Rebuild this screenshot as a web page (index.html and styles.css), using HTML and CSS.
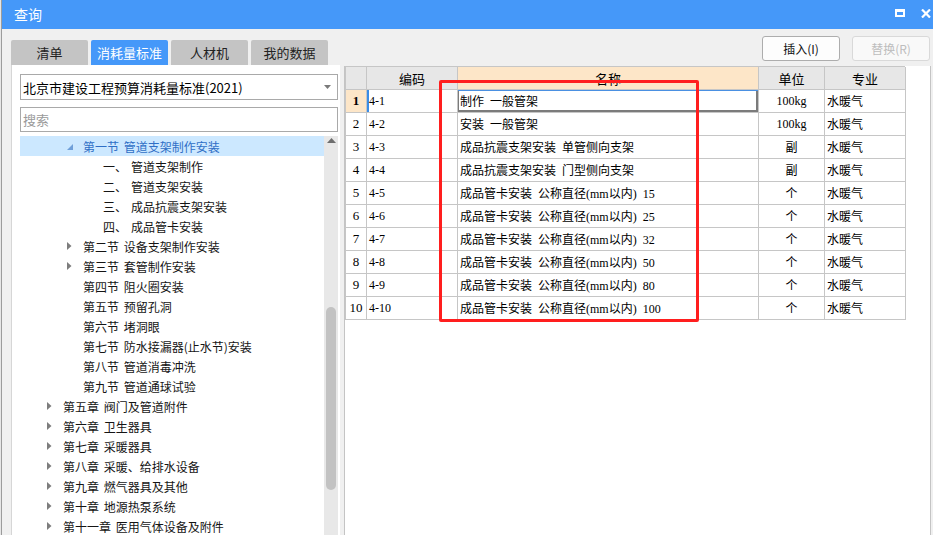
FILE: index.html
```html
<!DOCTYPE html>
<html lang="zh-CN">
<head>
<meta charset="utf-8">
<title>查询</title>
<link rel="stylesheet" href="styles.css">
</head>
<body>
<div class="window">
  <div class="titlebar">
    <span class="title">查询</span>
    <div class="winbtns">
      <span class="restore"></span>
      <svg class="close" width="10" height="9" viewBox="0 0 10 9"><path d="M1 0.5 L9 8.5 M9 0.5 L1 8.5" stroke="#fff" stroke-width="2.2" fill="none"/></svg>
    </div>
  </div>
  <div class="main">
    <div class="left">
      <div class="tabs">
        <div class="tab">清单</div>
        <div class="tab active">消耗量标准</div>
        <div class="tab">人材机</div>
        <div class="tab">我的数据</div>
      </div>
      <div class="lpanel">
        <div class="select">
          <span>北京市建设工程预算消耗量标准(2021)</span>
          <svg width="7" height="4" viewBox="0 0 7 4"><polygon points="0,0 7,0 3.5,4" fill="#7a7a7a"/></svg>
        </div>
        <div class="search">搜索</div>
        <div class="treewrap">
          <div class="tree">
            <div class="row lv3 sel"><span class="tg"><svg width="6" height="6" viewBox="0 0 6 6"><polygon points="6,0 6,6 0,6" fill="#6f9fd9"/></svg></span><span>第一节 管道支架制作安装</span></div>
            <div class="row lv4"><span class="tg"></span><span class="num">一、</span><span>管道支架制作</span></div>
            <div class="row lv4"><span class="tg"></span><span class="num">二、</span><span>管道支架安装</span></div>
            <div class="row lv4"><span class="tg"></span><span class="num">三、</span><span>成品抗震支架安装</span></div>
            <div class="row lv4"><span class="tg"></span><span class="num">四、</span><span>成品管卡安装</span></div>
            <div class="row lv3"><span class="tg"><svg width="5" height="8" viewBox="0 0 5 8"><polygon points="0,0 4.5,4 0,8" fill="#7d7d7d"/></svg></span><span>第二节 设备支架制作安装</span></div>
            <div class="row lv3"><span class="tg"><svg width="5" height="8" viewBox="0 0 5 8"><polygon points="0,0 4.5,4 0,8" fill="#7d7d7d"/></svg></span><span>第三节 套管制作安装</span></div>
            <div class="row lv3"><span class="tg"></span><span>第四节 阻火圈安装</span></div>
            <div class="row lv3"><span class="tg"></span><span>第五节 预留孔洞</span></div>
            <div class="row lv3"><span class="tg"></span><span>第六节 堵洞眼</span></div>
            <div class="row lv3"><span class="tg"></span><span>第七节 防水接漏器(止水节)安装</span></div>
            <div class="row lv3"><span class="tg"></span><span>第八节 管道消毒冲洗</span></div>
            <div class="row lv3"><span class="tg"></span><span>第九节 管道通球试验</span></div>
            <div class="row lv2"><span class="tg"><svg width="5" height="8" viewBox="0 0 5 8"><polygon points="0,0 4.5,4 0,8" fill="#7d7d7d"/></svg></span><span>第五章 阀门及管道附件</span></div>
            <div class="row lv2"><span class="tg"><svg width="5" height="8" viewBox="0 0 5 8"><polygon points="0,0 4.5,4 0,8" fill="#7d7d7d"/></svg></span><span>第六章 卫生器具</span></div>
            <div class="row lv2"><span class="tg"><svg width="5" height="8" viewBox="0 0 5 8"><polygon points="0,0 4.5,4 0,8" fill="#7d7d7d"/></svg></span><span>第七章 采暖器具</span></div>
            <div class="row lv2"><span class="tg"><svg width="5" height="8" viewBox="0 0 5 8"><polygon points="0,0 4.5,4 0,8" fill="#7d7d7d"/></svg></span><span>第八章 采暖、给排水设备</span></div>
            <div class="row lv2"><span class="tg"><svg width="5" height="8" viewBox="0 0 5 8"><polygon points="0,0 4.5,4 0,8" fill="#7d7d7d"/></svg></span><span>第九章 燃气器具及其他</span></div>
            <div class="row lv2"><span class="tg"><svg width="5" height="8" viewBox="0 0 5 8"><polygon points="0,0 4.5,4 0,8" fill="#7d7d7d"/></svg></span><span>第十章 地源热泵系统</span></div>
            <div class="row lv2"><span class="tg"><svg width="5" height="8" viewBox="0 0 5 8"><polygon points="0,0 4.5,4 0,8" fill="#7d7d7d"/></svg></span><span>第十一章 医用气体设备及附件</span></div>
          </div>
          <div class="vscroll">
            <svg class="up" width="9" height="5" viewBox="0 0 9 5"><polygon points="0,5 9,5 4.5,0" fill="#6e6e6e"/></svg>
            <div class="thumb"></div>
          </div>
        </div>
      </div>
    </div>
    <div class="right">
      <div class="toolbar">
        <button class="btn">插入(I)</button>
        <button class="btn" disabled>替换(R)</button>
      </div>
      <div class="rpanel">
        <div class="grid">
          <div class="h"></div><div class="h">编码</div><div class="h name">名称</div><div class="h">单位</div><div class="h">专业</div>

          <div class="n cur">1</div><div class="c code cur">4-1</div><div class="c nm cur">制作 一般管架</div><div class="c u">100kg</div><div class="c">水暖气</div>
          <div class="n">2</div><div class="c code">4-2</div><div class="c nm">安装 一般管架</div><div class="c u">100kg</div><div class="c">水暖气</div>
          <div class="n">3</div><div class="c code">4-3</div><div class="c nm">成品抗震支架安装 单管侧向支架</div><div class="c u">副</div><div class="c">水暖气</div>
          <div class="n">4</div><div class="c code">4-4</div><div class="c nm">成品抗震支架安装 门型侧向支架</div><div class="c u">副</div><div class="c">水暖气</div>
          <div class="n">5</div><div class="c code">4-5</div><div class="c nm">成品管卡安装 公称直径(mm以内) 15</div><div class="c u">个</div><div class="c">水暖气</div>
          <div class="n">6</div><div class="c code">4-6</div><div class="c nm">成品管卡安装 公称直径(mm以内) 25</div><div class="c u">个</div><div class="c">水暖气</div>
          <div class="n">7</div><div class="c code">4-7</div><div class="c nm">成品管卡安装 公称直径(mm以内) 32</div><div class="c u">个</div><div class="c">水暖气</div>
          <div class="n">8</div><div class="c code">4-8</div><div class="c nm">成品管卡安装 公称直径(mm以内) 50</div><div class="c u">个</div><div class="c">水暖气</div>
          <div class="n">9</div><div class="c code">4-9</div><div class="c nm">成品管卡安装 公称直径(mm以内) 80</div><div class="c u">个</div><div class="c">水暖气</div>
          <div class="n">10</div><div class="c code">4-10</div><div class="c nm">成品管卡安装 公称直径(mm以内) 100</div><div class="c u">个</div><div class="c">水暖气</div>
        </div>
        <div class="redbox"></div>
      </div>
    </div>
  </div>
</div>
</body>
</html>
```

FILE: styles.css
```css
* { box-sizing: border-box; }
html, body { margin: 0; padding: 0; }
body {
  width: 933px;
  height: 535px;
  overflow: hidden;
  background: #e6e6e6;
  padding-left: 1px;
  font-family: "Noto Sans CJK SC", "Noto Sans", sans-serif;
  font-size: 12px;
  color: #111;
}
.window {
  width: 932px;
  height: 535px;
  background: #f0f0f0;
  border-left: 1px solid #9c9c9c;
  display: flex;
  flex-direction: column;
}
.titlebar {
  height: 29px;
  flex: none;
  background: #4598f9;
  display: flex;
  align-items: center;
  justify-content: space-between;
  padding-left: 12px;
  padding-right: 2px;
}
.title { color: #fff; font-size: 14px; line-height: 29px; }
.winbtns { display: flex; align-items: center; gap: 16px; height: 29px; }
.restore {
  width: 10px;
  height: 8px;
  border: 2px solid #fff;
  border-top-width: 3px;
  margin-top: -3px;
}
.close { margin-top: -3px; }

.main { flex: 1; display: flex; min-height: 0; }

.left {
  width: 338px;
  padding-left: 9px;
  display: flex;
  flex-direction: column;
}
.tabs {
  margin-top: 11px;
  height: 25px;
  display: flex;
  gap: 3px;
  flex: none;
}
.tab {
  width: 77px;
  background: #c4c4c4;
  border-radius: 2px 2px 0 0;
  color: #222;
  font-size: 13px;
  display: flex;
  align-items: center;
  justify-content: center;
}
.tab.active { background: #4598f9; color: #fff; }

.lpanel {
  flex: 1;
  background: #fff;
  border-left: 1px solid #d6d6d6;
  padding: 9px 2px 0 8px;
  display: flex;
  flex-direction: column;
  min-height: 0;
}
.select {
  height: 26px;
  border: 1px solid #a9a9a9;
  display: flex;
  align-items: center;
  justify-content: space-between;
  padding: 0 6px 0 2px;
  font-size: 13px;
  color: #000;
  flex: none;
}
.search {
  margin-top: 7px;
  height: 25px;
  border: 1px solid #a9a9a9;
  padding-left: 2px;
  font-size: 13px;
  color: #9a9a9a;
  line-height: 23px;
  flex: none;
}
.treewrap {
  margin-top: 4px;
  flex: 1;
  display: flex;
  min-height: 0;
  overflow: hidden;
}
.tree { flex: 1; }
.row {
  height: 20px;
  display: flex;
  align-items: center;
  white-space: nowrap;
  word-spacing: 2px;
  color: #151515;
}
.row.lv2 { padding-left: 27px; }
.row.lv3 { padding-left: 47px; }
.row.lv4 { padding-left: 67px; }
.row.sel { background: #cce8ff; color: #2f6fc6; }
.tg { width: 16px; flex: none; display: flex; align-items: center; }
.row.sel .tg svg { margin-top: 2px; }
.num { width: 28px; flex: none; }
.vscroll {
  width: 14px;
  flex: none;
  background: #e8e8e8;
  display: flex;
  flex-direction: column;
  align-items: center;
}
.vscroll .up { margin-top: 2px; flex: none; }
.thumb {
  margin-top: 164px;
  width: 10px;
  height: 183px;
  background: #c2c2c2;
  border-radius: 5px;
  flex: none;
}

.right {
  width: 587px;
  margin-left: 4px;
  display: flex;
  flex-direction: column;
}
.toolbar {
  height: 37px;
  flex: none;
  display: flex;
  justify-content: flex-end;
  align-items: flex-start;
  gap: 12px;
  padding-top: 7px;
  padding-right: 1px;
}
.btn {
  width: 78px;
  height: 25px;
  background: #fdfdfd;
  border: 1px solid #adadad;
  border-radius: 3px;
  font-family: "Noto Sans CJK SC", "Noto Sans", sans-serif;
  font-size: 12px;
  color: #111;
  padding: 0;
}
.btn:disabled { color: #bdbdbd; border-color: #d9d9d9; background: #f9f9f9; }

.rpanel {
  flex: 1;
  position: relative;
  background: #fff;
  border-left: 1px solid #c4c4c4;
  border-right: 1px solid #c4c4c4;
}
.grid {
  display: grid;
  grid-template-columns: 21px 91px 301px 66px 81px;
  grid-auto-rows: 23px;
  width: 560px;
  border-top: 1px solid #c6c6c6;
  border-left: 1px solid #c6c6c6;
  font-family: "Liberation Serif", "Noto Sans CJK SC", serif;
  font-size: 12px;
  color: #000;
}
.grid > div {
  border-right: 1px solid #c6c6c6;
  border-bottom: 1px solid #c6c6c6;
  display: flex;
  align-items: center;
  white-space: nowrap;
  overflow: hidden;
}
.h {
  background: #e7e7e7;
  justify-content: center;
  font-family: "Noto Sans CJK SC", sans-serif;
  font-size: 13px;
}
.h.name { background: #fde6c8; }
.n { justify-content: center; font-size: 13px; }
.n.cur { background: #fde6c8; font-weight: bold; }
.c { padding-left: 2px; }
.nm { word-spacing: 3px; }
.u { justify-content: center; padding-left: 0; }
.code.cur { box-shadow: inset 2px 0 0 #3c8de6; }
.nm.cur { box-shadow: inset 0 1px 0 #4a90e2, inset 1px 0 0 #7b7b7b, inset -2px -2px 0 #7b7b7b; }

.redbox {
  position: absolute;
  left: 94px;
  top: 14px;
  width: 260px;
  height: 242px;
  border: 3px solid #ff1e1e;
  border-radius: 2px;
  pointer-events: none;
}
```
